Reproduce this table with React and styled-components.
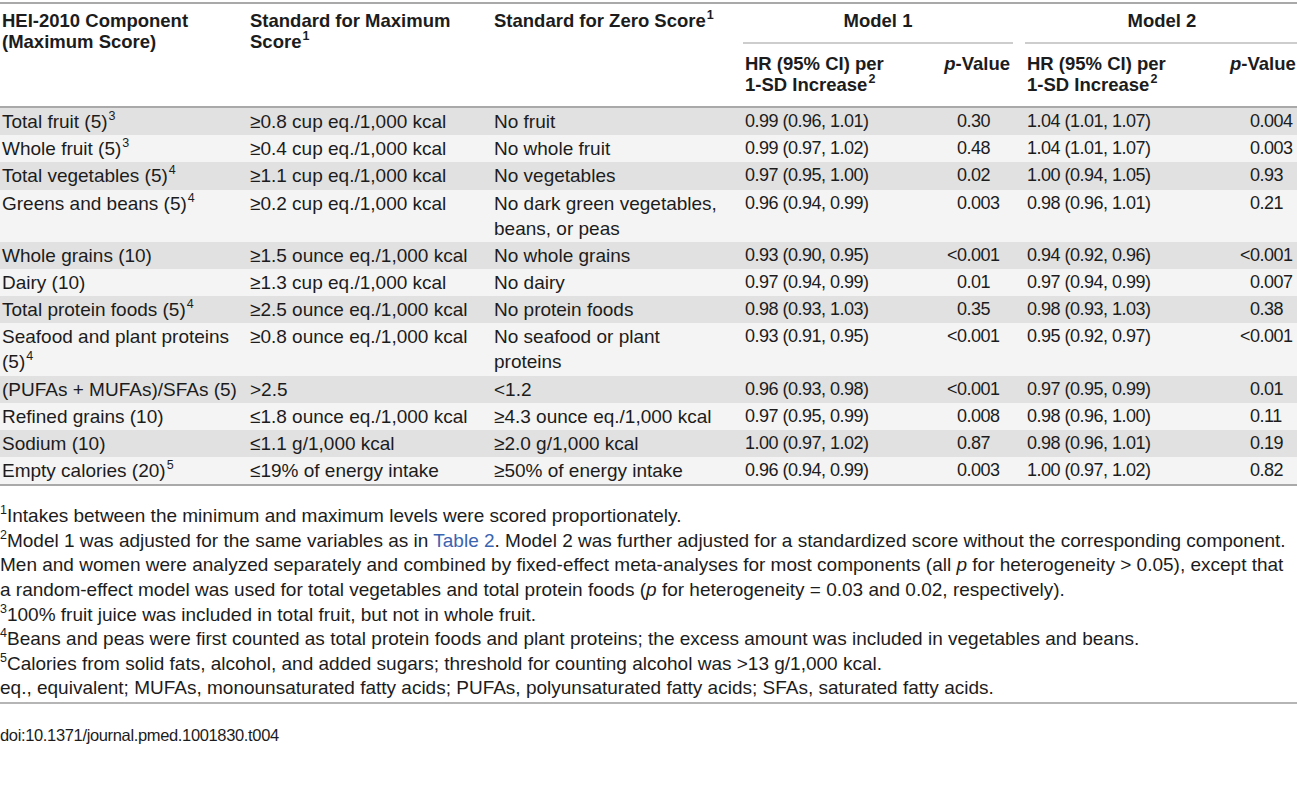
import React from "react";
import styled, { createGlobalStyle } from "styled-components";

const GlobalStyle = createGlobalStyle`
  html, body { margin: 0; padding: 0; background: #ffffff; }
  body {
    font-family: "Liberation Sans", Arial, Helvetica, sans-serif;
    color: #1c1c1c;
  }
`;

const COLS = "248px 244px 251px 197px 85px 203px 1fr";

const Page = styled.div`
  width: 1297px;
  padding-top: 2px;
`;

const Table = styled.div`
  border-top: 2px solid #a9a9a9;
  border-bottom: 2px solid #a9a9a9;
  font-size: 19px;
`;

const Head = styled.div`
  display: grid;
  grid-template-columns: ${COLS};
  grid-template-rows: auto auto;
  border-bottom: 2px solid #a9a9a9;
  font-weight: bold;
  font-size: 18.5px;
  line-height: 21px;
  background: #ffffff;
`;

const HeadCell = styled.div`
  grid-row: 1 / span 2;
  padding: 6px 2px 0;
`;

const GroupHead = styled.div`
  grid-column: span 2;
  padding: 6px 0 11px;
  margin-right: ${(p) => p.$gap}px;
  text-align: center;
  border-bottom: 2px solid #cdcdcd;
`;

const SubHead = styled.div`
  padding: 9px ${(p) => (p.$right ? `${p.$pr}px` : "2px")} 11px 2px;
  text-align: ${(p) => (p.$right ? "right" : "left")};
  white-space: nowrap;
`;

const Row = styled.div`
  display: grid;
  grid-template-columns: ${COLS};
  background: ${(p) => (p.$shade ? "#e1e1e1" : "#f4f4f4")};
  line-height: 25px;
`;

const Cell = styled.div`
  padding: 1px 2px 1.2px;
`;

const NumCell = styled.div`
  padding: 1px 2px 1.2px;
  font-size: 18px;
  letter-spacing: -0.5px;
`;

const PCell = styled(NumCell)`
  padding-left: ${(p) => p.$indent}px;
`;

const Lt = styled.span`
  margin-left: -10px;
`;

const Sup = styled.sup`
  font-size: 12.5px;
  line-height: 0;
  vertical-align: 8px;
  margin-left: 1px;
`;

const Notes = styled.div`
  font-size: 19px;
  line-height: 24.6px;
  padding: 18px 0 1px;
  border-bottom: 2px solid #b5b5b5;
`;

const Note = styled.div`
  white-space: nowrap;
`;

const NoteSup = styled.sup`
  font-size: 12.5px;
  line-height: 0;
  vertical-align: 8px;
`;

const Link = styled.a`
  color: #3a64b0;
  text-decoration: none;
`;

const Doi = styled.div`
  font-size: 16.5px;
  letter-spacing: -0.35px;
  line-height: 24px;
  padding-top: 19px;
`;

const Italic = styled.i``;

const rows = [
  ["Total fruit (5)", "3", "≥0.8 cup eq./1,000 kcal", "No fruit", "0.99 (0.96, 1.01)", "0.30", "1.04 (1.01, 1.07)", "0.004"],
  ["Whole fruit (5)", "3", "≥0.4 cup eq./1,000 kcal", "No whole fruit", "0.99 (0.97, 1.02)", "0.48", "1.04 (1.01, 1.07)", "0.003"],
  ["Total vegetables (5)", "4", "≥1.1 cup eq./1,000 kcal", "No vegetables", "0.97 (0.95, 1.00)", "0.02", "1.00 (0.94, 1.05)", "0.93"],
  ["Greens and beans (5)", "4", "≥0.2 cup eq./1,000 kcal", ["No dark green vegetables,", "beans, or peas"], "0.96 (0.94, 0.99)", "0.003", "0.98 (0.96, 1.01)", "0.21"],
  ["Whole grains (10)", "", "≥1.5 ounce eq./1,000 kcal", "No whole grains", "0.93 (0.90, 0.95)", "<0.001", "0.94 (0.92, 0.96)", "<0.001"],
  ["Dairy (10)", "", "≥1.3 cup eq./1,000 kcal", "No dairy", "0.97 (0.94, 0.99)", "0.01", "0.97 (0.94, 0.99)", "0.007"],
  ["Total protein foods (5)", "4", "≥2.5 ounce eq./1,000 kcal", "No protein foods", "0.98 (0.93, 1.03)", "0.35", "0.98 (0.93, 1.03)", "0.38"],
  [["Seafood and plant proteins", "(5)"], "4", "≥0.8 ounce eq./1,000 kcal", ["No seafood or plant", "proteins"], "0.93 (0.91, 0.95)", "<0.001", "0.95 (0.92, 0.97)", "<0.001"],
  ["(PUFAs + MUFAs)/SFAs (5)", "", ">2.5", "<1.2", "0.96 (0.93, 0.98)", "<0.001", "0.97 (0.95, 0.99)", "0.01"],
  ["Refined grains (10)", "", "≤1.8 ounce eq./1,000 kcal", "≥4.3 ounce eq./1,000 kcal", "0.97 (0.95, 0.99)", "0.008", "0.98 (0.96, 1.00)", "0.11"],
  ["Sodium (10)", "", "≤1.1 g/1,000 kcal", "≥2.0 g/1,000 kcal", "1.00 (0.97, 1.02)", "0.87", "0.98 (0.96, 1.01)", "0.19"],
  ["Empty calories (20)", "5", "≤19% of energy intake", "≥50% of energy intake", "0.96 (0.94, 0.99)", "0.003", "1.00 (0.97, 1.02)", "0.82"],
];

function Lines({ value }) {
  if (Array.isArray(value)) {
    return value.map((v, i) => (
      <React.Fragment key={i}>
        {i > 0 && <br />}
        {v}
      </React.Fragment>
    ));
  }
  return value;
}

function PValue({ value, indent }) {
  if (value.startsWith("<")) {
    return (
      <PCell $indent={indent}>
        <Lt>&lt;</Lt>
        {value.slice(1)}
      </PCell>
    );
  }
  return <PCell $indent={indent}>{value}</PCell>;
}

function FirstCell({ value, sup }) {
  return (
    <Cell>
      <Lines value={value} />
      {sup && <Sup>{sup}</Sup>}
    </Cell>
  );
}

export default function App() {
  return (
    <Page>
      <GlobalStyle />
      <Table>
        <Head>
          <HeadCell>
            HEI-2010 Component
            <br />
            (Maximum Score)
          </HeadCell>
          <HeadCell>
            Standard for Maximum
            <br />
            Score<Sup>1</Sup>
          </HeadCell>
          <HeadCell>
            Standard for Zero Score<Sup>1</Sup>
          </HeadCell>
          <GroupHead $gap={12}>Model 1</GroupHead>
          <GroupHead $gap={0}>Model 2</GroupHead>
          <SubHead>
            HR (95% CI) per
            <br />
            1-SD Increase<Sup>2</Sup>
          </SubHead>
          <SubHead $right $pr={15}>
            <Italic>p</Italic>-Value
          </SubHead>
          <SubHead>
            HR (95% CI) per
            <br />
            1-SD Increase<Sup>2</Sup>
          </SubHead>
          <SubHead $right $pr={3}>
            <Italic>p</Italic>-Value
          </SubHead>
        </Head>
        {rows.map((r, i) => (
          <Row key={i} $shade={i % 2 === 0}>
            <FirstCell value={r[0]} sup={r[1]} />
            <Cell>{r[2]}</Cell>
            <Cell>
              <Lines value={r[3]} />
            </Cell>
            <NumCell>{r[4]}</NumCell>
            <PValue value={r[5]} indent={17} />
            <NumCell>{r[6]}</NumCell>
            <PValue value={r[7]} indent={22} />
          </Row>
        ))}
      </Table>
      <Notes>
        <Note>
          <NoteSup>1</NoteSup>Intakes between the minimum and maximum levels were scored proportionately.
        </Note>
        <Note>
          <NoteSup>2</NoteSup>Model 1 was adjusted for the same variables as in <Link href="#">Table 2</Link>. Model 2 was further adjusted for a standardized score without the corresponding component.
        </Note>
        <Note>
          Men and women were analyzed separately and combined by fixed-effect meta-analyses for most components (all <Italic>p</Italic> for heterogeneity &gt; 0.05), except that
        </Note>
        <Note>
          a random-effect model was used for total vegetables and total protein foods (<Italic>p</Italic> for heterogeneity = 0.03 and 0.02, respectively).
        </Note>
        <Note>
          <NoteSup>3</NoteSup>100% fruit juice was included in total fruit, but not in whole fruit.
        </Note>
        <Note>
          <NoteSup>4</NoteSup>Beans and peas were first counted as total protein foods and plant proteins; the excess amount was included in vegetables and beans.
        </Note>
        <Note>
          <NoteSup>5</NoteSup>Calories from solid fats, alcohol, and added sugars; threshold for counting alcohol was &gt;13 g/1,000 kcal.
        </Note>
        <Note>eq., equivalent; MUFAs, monounsaturated fatty acids; PUFAs, polyunsaturated fatty acids; SFAs, saturated fatty acids.</Note>
      </Notes>
      <Doi>doi:10.1371/journal.pmed.1001830.t004</Doi>
    </Page>
  );
}
